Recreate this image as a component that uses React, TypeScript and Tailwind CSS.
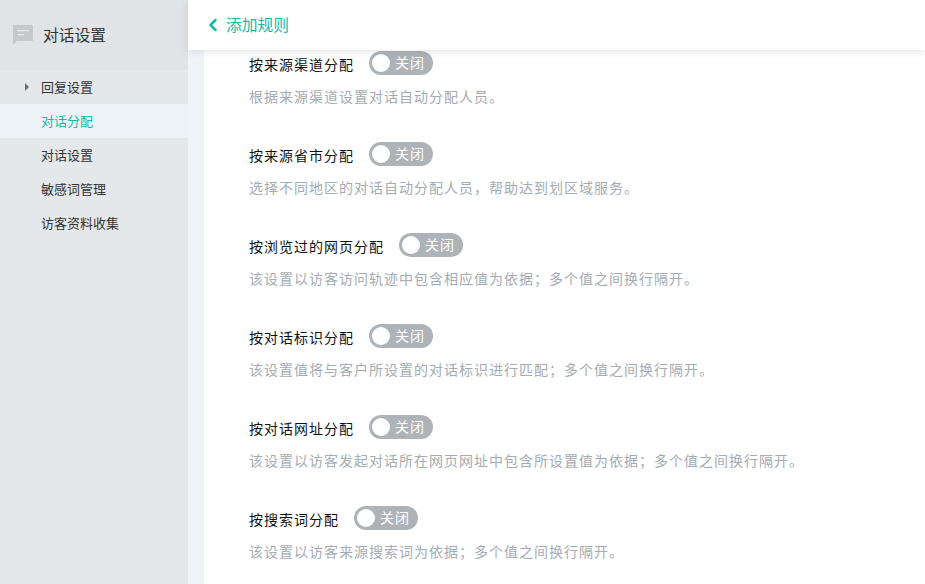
import React from 'react';
import { ChevronLeft } from 'lucide-react';

const menuItems = [
  { label: '回复设置', caret: true },
  { label: '对话分配', active: true },
  { label: '对话设置' },
  { label: '敏感词管理' },
  { label: '访客资料收集' },
];

const rules = [
  { title: '按来源渠道分配', desc: '根据来源渠道设置对话自动分配人员。' },
  { title: '按来源省市分配', desc: '选择不同地区的对话自动分配人员，帮助达到划区域服务。' },
  { title: '按浏览过的网页分配', desc: '该设置以访客访问轨迹中包含相应值为依据；多个值之间换行隔开。' },
  { title: '按对话标识分配', desc: '该设置值将与客户所设置的对话标识进行匹配；多个值之间换行隔开。' },
  { title: '按对话网址分配', desc: '该设置以访客发起对话所在网页网址中包含所设置值为依据；多个值之间换行隔开。' },
  { title: '按搜索词分配', desc: '该设置以访客来源搜索词为依据；多个值之间换行隔开。' },
];

const Toggle: React.FC = () => (
  <div className="flex h-6 w-16 items-center rounded-full bg-[#aeb3b8] pl-[3px]">
    <span className="h-[18px] w-[18px] rounded-full bg-white" />
    <span className="ml-[5px] -translate-y-px text-sm leading-none tracking-[1px] text-white">关闭</span>
  </div>
);

export default function App() {
  return (
    <div className="flex h-[584px] w-[925px] overflow-hidden bg-white font-['Noto_Sans_CJK_SC','Noto_Sans',sans-serif]">
      <aside className="w-[188px] shrink-0 bg-[#e5e8eb]">
        <div className="flex h-[70px] items-center bg-[#e1e4e7] pl-[13px]">
          <svg width="20" height="20" viewBox="0 0 20 20" className="mr-[10px]">
            <path d="M1 0h18a1 1 0 0 1 1 1v14a1 1 0 0 1-1 1H4l-4 4V1a1 1 0 0 1 1-1z" fill="#c6c8ca" />
            <path d="M4 5h12v1.2H4zM4 9h7v1.2H4z" fill="#e5e8eb" />
          </svg>
          <span className="text-[15.75px] text-[#333]">对话设置</span>
        </div>
        <ul>
          {menuItems.map(item => (
            <li
              key={item.label}
              className={`relative flex h-[34px] items-center pl-[41px] text-[13px] ${
                item.active ? 'bg-[#edf2f6] text-[#17b9a5]' : 'text-[#333]'
              }`}
            >
              {item.caret && (
                <span className="absolute left-[25px] top-[13px] h-0 w-0 border-y-4 border-l-4 border-y-transparent border-l-[#6b7075]" />
              )}
              {item.label}
            </li>
          ))}
        </ul>
      </aside>

      <main className="relative flex-1 bg-[#f0f4f8] pl-4">
        <header className="absolute inset-x-0 top-0 z-10 flex h-[50px] items-center bg-white pl-[15px] shadow-[0_2px_8px_rgba(0,0,0,0.1)]">
          <ChevronLeft className="h-5 w-5 text-[#17b9a5]" strokeWidth={3} />
          <span className="ml-[3px] text-[15.75px] text-[#17b9a5]">添加规则</span>
        </header>
        <div className="h-full bg-white pl-[45px] pt-[51px]">
          {rules.map(rule => (
            <section key={rule.title} className="mb-[25px] h-[66px]">
              <div className="flex h-6 items-center">
                <span className="mr-[15px] translate-y-px text-sm leading-none tracking-[1px] text-[#111]">{rule.title}</span>
                <Toggle />
              </div>
              <p className="mt-3 text-sm leading-[19px] tracking-[1px] text-[#a4abb3]">{rule.desc}</p>
            </section>
          ))}
        </div>
      </main>
    </div>
  );
}
